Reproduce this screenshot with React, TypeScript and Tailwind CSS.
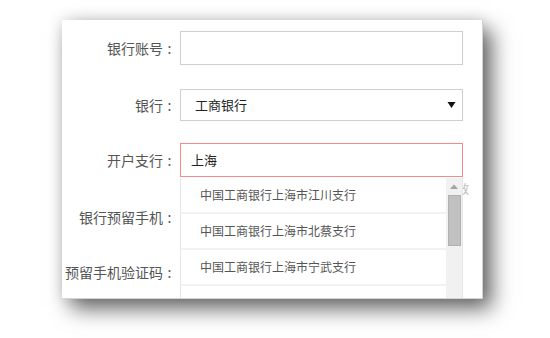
import React from "react";

const font = { fontFamily: '"Microsoft YaHei", "Noto Sans CJK SC", "Noto Sans", sans-serif' };

function Label({ children }: { children: React.ReactNode }) {
  return (
    <div className="w-[114px] shrink-0 flex justify-end items-center text-[14px] leading-none text-[#555]">
      <span>{children}</span>
      <span className="w-[13px] text-center">:</span>
    </div>
  );
}

const items = ["中国工商银行上海市江川支行", "中国工商银行上海市北蔡支行", "中国工商银行上海市宁武支行", ""];

export default function App() {
  return (
    <div className="w-[550px] h-[338px] bg-white overflow-hidden pt-[20px] pl-[62px]" style={font}>
      <div className="relative w-[421px] h-[279px] bg-white overflow-hidden border-r border-b border-[#d4d4d4] shadow-[9px_10px_20px_rgba(0,0,0,0.58),0_0_14px_rgba(0,0,0,0.14)]">
        <div className="flex flex-col">
          <div className="flex items-center mt-[11px] h-[34px]">
            <Label>银行账号</Label>
            <div className="ml-[4px] w-[283px] h-[34px] border border-[#cfcfcf] bg-white" />
          </div>
          <div className="flex items-center mt-[24px] h-[32px]">
            <Label>银行</Label>
            <div className="ml-[4px] w-[283px] h-[32px] border border-[#cfcfcf] bg-white flex items-center justify-between pl-[14px] pr-[6px]">
              <span className="text-[13px] text-[#222]">工商银行</span>
              <svg width="9" height="8" viewBox="0 0 9 8"><path d="M0.5 1 L8.5 1 L4.5 7 Z" fill="#111" /></svg>
            </div>
          </div>
          <div className="flex items-center mt-[22px] h-[34px]">
            <Label>开户支行</Label>
            <div className="ml-[4px] w-[283px] h-[34px] border border-[#f28b8b] bg-white flex items-center pl-[10px]">
              <span className="text-[13px] text-[#222]">上海</span>
            </div>
          </div>
          <div className="flex items-center mt-[23px] h-[34px]">
            <Label>银行预留手机</Label>
          </div>
          <div className="flex items-center mt-[21px] h-[34px]">
            <Label>预留手机验证码</Label>
          </div>
        </div>

        <span className="absolute left-[395px] top-[163px] text-[12px] text-[#bbb] leading-none">效</span>

        <div className="absolute left-[118px] top-[158px] w-[283px] h-[160px] bg-white border-l border-r border-[#e6e6e6] flex">
          <div className="flex-1 flex flex-col">
            {items.map((t, i) => (
              <div key={i} className="h-[36px] shrink-0 border-b-2 border-[#f2f2f2] flex items-center pl-[19px] text-[12px] text-[#555]">
                {t}
              </div>
            ))}
          </div>
          <div className="w-[16px] bg-[#f1f1f1] flex flex-col items-center">
            <div className="h-[17px] flex items-center justify-center">
              <svg width="8" height="5" viewBox="0 0 8 5"><path d="M0 5 L4 0.5 L8 5 Z" fill="#a3a3a3" /></svg>
            </div>
            <div className="w-[13px] h-[51px] bg-[#c1c1c1] border border-[#b0b0b0]" />
          </div>
        </div>
      </div>
    </div>
  );
}
